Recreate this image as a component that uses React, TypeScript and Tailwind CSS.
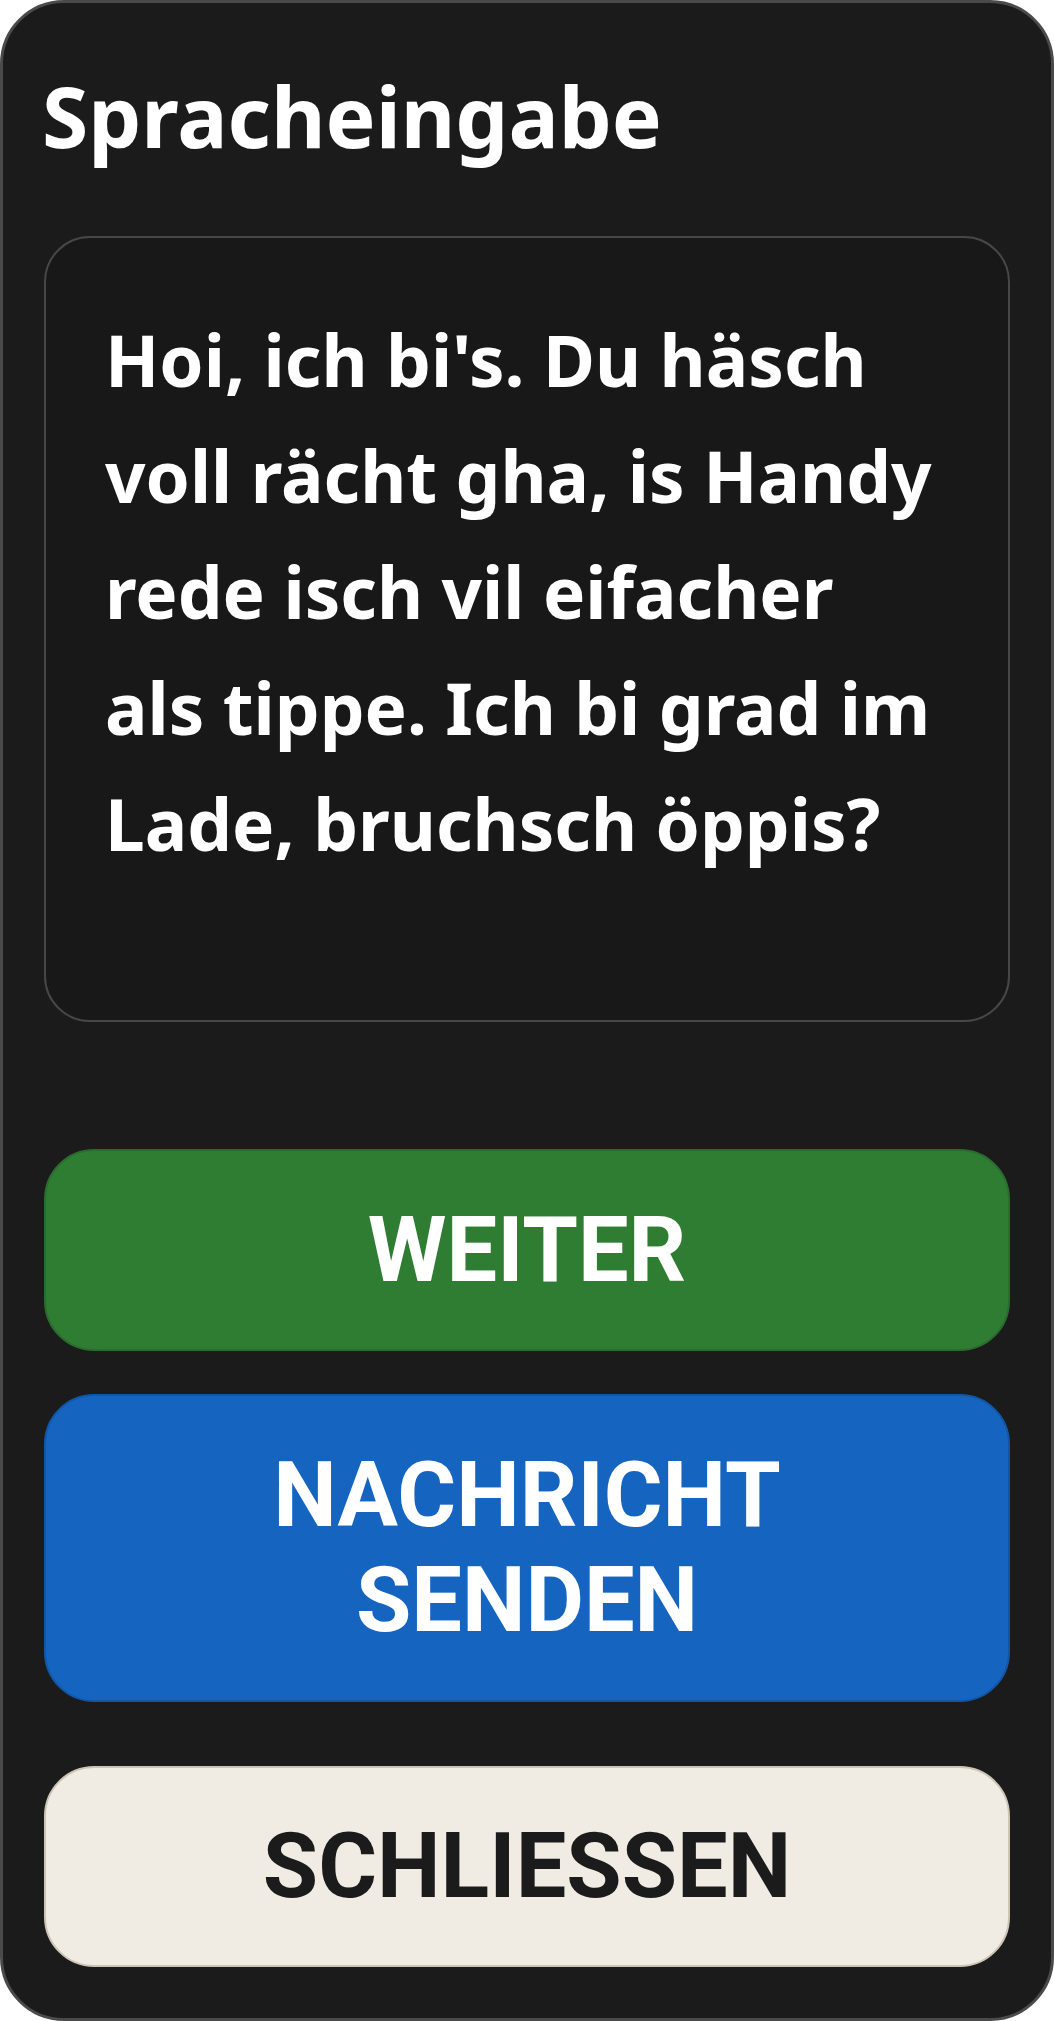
export default function App() {
  return (
    <div className="bg-white">
      <div className="flex h-[2021px] w-[1054px] flex-col rounded-[64px] border-[3px] border-[#4a4a4a] bg-[#1b1b1b] px-[41px] pt-[62px] pb-[51px]">
        <h1 className="-ml-[2px] font-['Noto_Sans',sans-serif] text-[84px] leading-[101px] font-bold text-white">
          Spracheingabe
        </h1>

        <div className="mt-[70px] h-[786px] rounded-[46px] border-2 border-[#474747] bg-[#181818] pt-[64px] pr-[66px] pl-[59px]">
          <p className="font-['Noto_Sans',sans-serif] text-[71px] leading-[116px] font-bold text-white">
            Hoi, ich bi's. Du häsch voll rächt gha, is Handy rede isch vil eifacher als tippe. Ich bi grad im Lade, bruchsch öppis?
          </p>
        </div>

        <button className="mt-[127px] flex h-[202px] items-center justify-center rounded-[50px] border-2 border-[#2a6b2e] bg-[#2e7d32] font-['Roboto',sans-serif] text-[90px] leading-[105px] font-bold text-white">
          WEITER
        </button>

        <button className="mt-[43px] flex h-[308px] items-center justify-center rounded-[50px] border-2 border-[#1256a6] bg-[#1565c0] text-center font-['Roboto',sans-serif] text-[90px] leading-[105px] font-bold text-white">
          NACHRICHT
          <br />
          SENDEN
        </button>

        <button className="mt-[64px] flex h-[201px] items-center justify-center rounded-[50px] border-2 border-[#cdc5b4] bg-[#f0ebe3] font-['Roboto',sans-serif] text-[90px] leading-[105px] font-bold text-[#1b1b1b]">
          SCHLIESSEN
        </button>
      </div>
    </div>
  );
}
